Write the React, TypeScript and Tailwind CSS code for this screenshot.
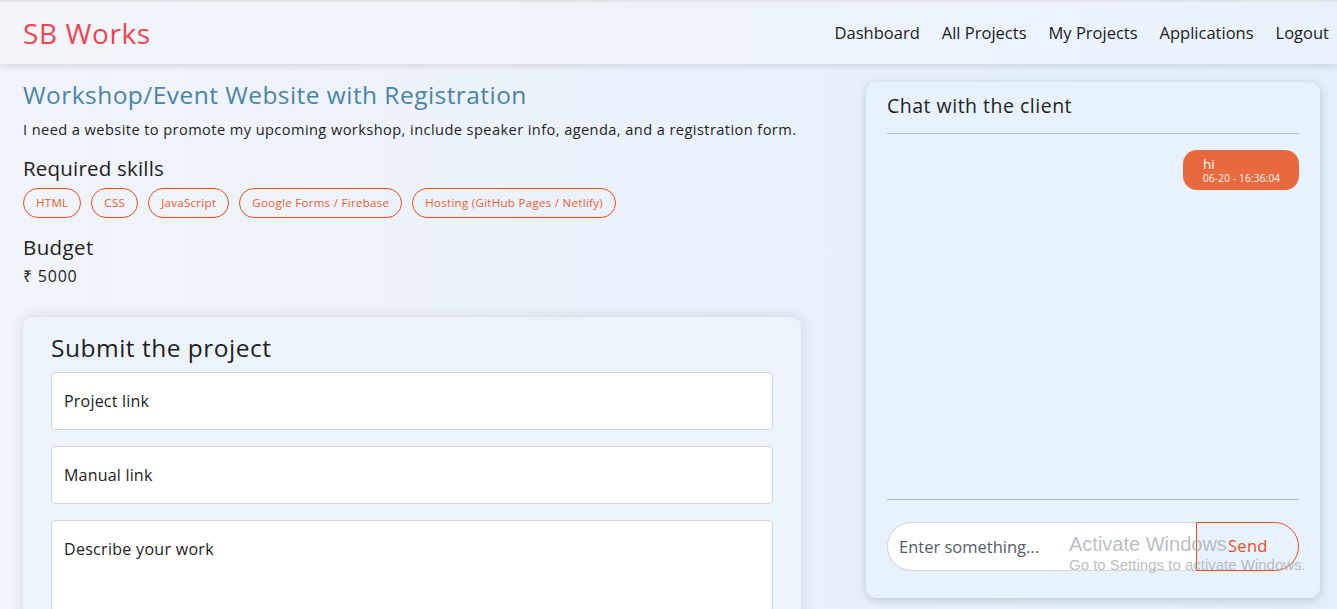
const skills = [
  "HTML",
  "CSS",
  "JavaScript",
  "Google Forms / Firebase",
  "Hosting (GitHub Pages / Netlify)",
];

const links = ["Dashboard", "All Projects", "My Projects", "Applications", "Logout"];

function Navbar() {
  return (
    <nav className="flex h-[64px] items-center justify-between border-t-2 border-[#e2e4e8] bg-gradient-to-r from-[#f3f5fa] to-[#e9f2fc] pr-[8px] pl-[23px] shadow-[0_2px_6px_rgba(0,0,0,0.12)]">
      <h3 className="text-[28px] tracking-[0.6px] text-[#ee4552]">SB Works</h3>
      <div className="flex items-center gap-[22px] text-[16.5px] text-[#1b1b1b]">
        {links.map((l) => (
          <span key={l}>{l}</span>
        ))}
      </div>
    </nav>
  );
}

function ProjectInfo() {
  return (
    <div>
      <h3 className="text-[24.5px] leading-[32px] tracking-[0.45px] text-[#4a84a8]">
        Workshop/Event Website with Registration
      </h3>
      <p className="mt-[8px] text-[14.6px] leading-[20px] tracking-[0.42px] text-[#1f1f1f]">
        I need a website to promote my upcoming workshop, include speaker info, agenda, and a
        registration form.
      </p>
      <h5 className="mt-[15px] text-[20.5px] leading-[28px] tracking-[0.2px] text-[#1f1f1f]">
        Required skills
      </h5>
      <div className="mt-[6px] flex gap-[10px]">
        {skills.map((s) => (
          <span
            key={s}
            className="flex h-[30px] items-center rounded-full border border-[#f04a1d] px-[12px] text-[11.5px] tracking-[0.3px] text-[#f05a2c]"
          >
            {s}
          </span>
        ))}
      </div>
      <h5 className="mt-[15px] text-[20.5px] leading-[28px] tracking-[0.4px] text-[#1f1f1f]">
        Budget
      </h5>
      <p className="mt-[5px] text-[16px] leading-[20px] tracking-[0.8px] text-[#1f1f1f]">₹ 5000</p>
    </div>
  );
}

function SubmitForm() {
  return (
    <div className="mt-[31px] w-[778px] rounded-t-[10px] bg-[#edf3fb] px-[28px] pt-[15px] pb-[20px] shadow-[0_0_14px_rgba(0,0,0,0.12)]">
      <h3 className="text-[24.5px] leading-[32px] tracking-[0.5px] text-[#1f1f1f]">
        Submit the project
      </h3>
      <div className="mt-[8px] flex flex-col gap-[16px]">
        <input
          className="h-[58px] w-full rounded-[4px] border border-[#cfd5df] bg-white px-[12px] text-[16px] tracking-[0.2px] outline-none placeholder:text-[#222]"
          placeholder="Project link"
        />
        <input
          className="h-[58px] w-full rounded-[4px] border border-[#cfd5df] bg-white px-[12px] text-[16px] tracking-[0.2px] outline-none placeholder:text-[#222]"
          placeholder="Manual link"
        />
        <textarea
          className="h-[120px] w-full resize-none rounded-[4px] border border-[#cfd5df] bg-white px-[12px] pt-[16px] text-[16px] tracking-[0.3px] outline-none placeholder:text-[#222]"
          placeholder="Describe your work"
        />
      </div>
    </div>
  );
}

function ChatBox() {
  return (
    <div className="flex h-[516px] w-[454px] flex-col rounded-[10px] bg-[#e8f2fc] px-[21px] pt-[12px] pb-[27px] shadow-[0_2px_10px_rgba(0,0,0,0.18)]">
      <h5 className="text-[19.5px] leading-[24px] tracking-[0.5px] text-[#1f1f1f]">
        Chat with the client
      </h5>
      <hr className="mt-[15px] border-t border-[#b3bcc8]" />
      <div className="flex flex-1 flex-col items-end pt-[16px]">
        <div className="flex h-[40px] w-[116px] flex-col justify-center rounded-[14px] bg-[#e8693e] pt-[2px] pl-[20px] text-white">
          <span className="text-[13.5px] leading-[15px]">hi</span>
          <span className="text-[10px] leading-[13px] tracking-[0.2px]">06-20 - 16:36:04</span>
        </div>
      </div>
      <hr className="border-t border-[#b3bcc8]" />
      <div className="mt-[22px] flex h-[49px]">
        <input
          className="h-full flex-1 rounded-l-full border border-r-0 border-[#d3d6da] bg-white px-[11px] text-[16.5px] outline-none placeholder:text-[#555c66]"
          placeholder="Enter something..."
        />
        <button className="h-full w-[103px] rounded-r-full border border-[#f04a1d] pl-[31px] text-left text-[16.5px] tracking-[0.3px] text-[#f04a1d]">
          Send
        </button>
      </div>
    </div>
  );
}

export default function App() {
  return (
    <div className="relative h-[609px] overflow-hidden bg-gradient-to-r from-[#f1f4fa] to-[#e3effb] font-['Open_Sans',sans-serif]">
      <Navbar />
      <div className="flex">
        <div className="w-[866px] shrink-0 pt-[15px] pl-[23px]">
          <ProjectInfo />
          <SubmitForm />
        </div>
        <div className="pt-[18px]">
          <ChatBox />
        </div>
      </div>
      <div className="pointer-events-none absolute top-[532px] left-[1069px] font-['Liberation_Sans',sans-serif] text-[#a9adb2]/80">
        <div className="text-[20px] leading-[24px]">Activate Windows</div>
        <div className="text-[15px] leading-[18px]">Go to Settings to activate Windows.</div>
      </div>
    </div>
  );
}
